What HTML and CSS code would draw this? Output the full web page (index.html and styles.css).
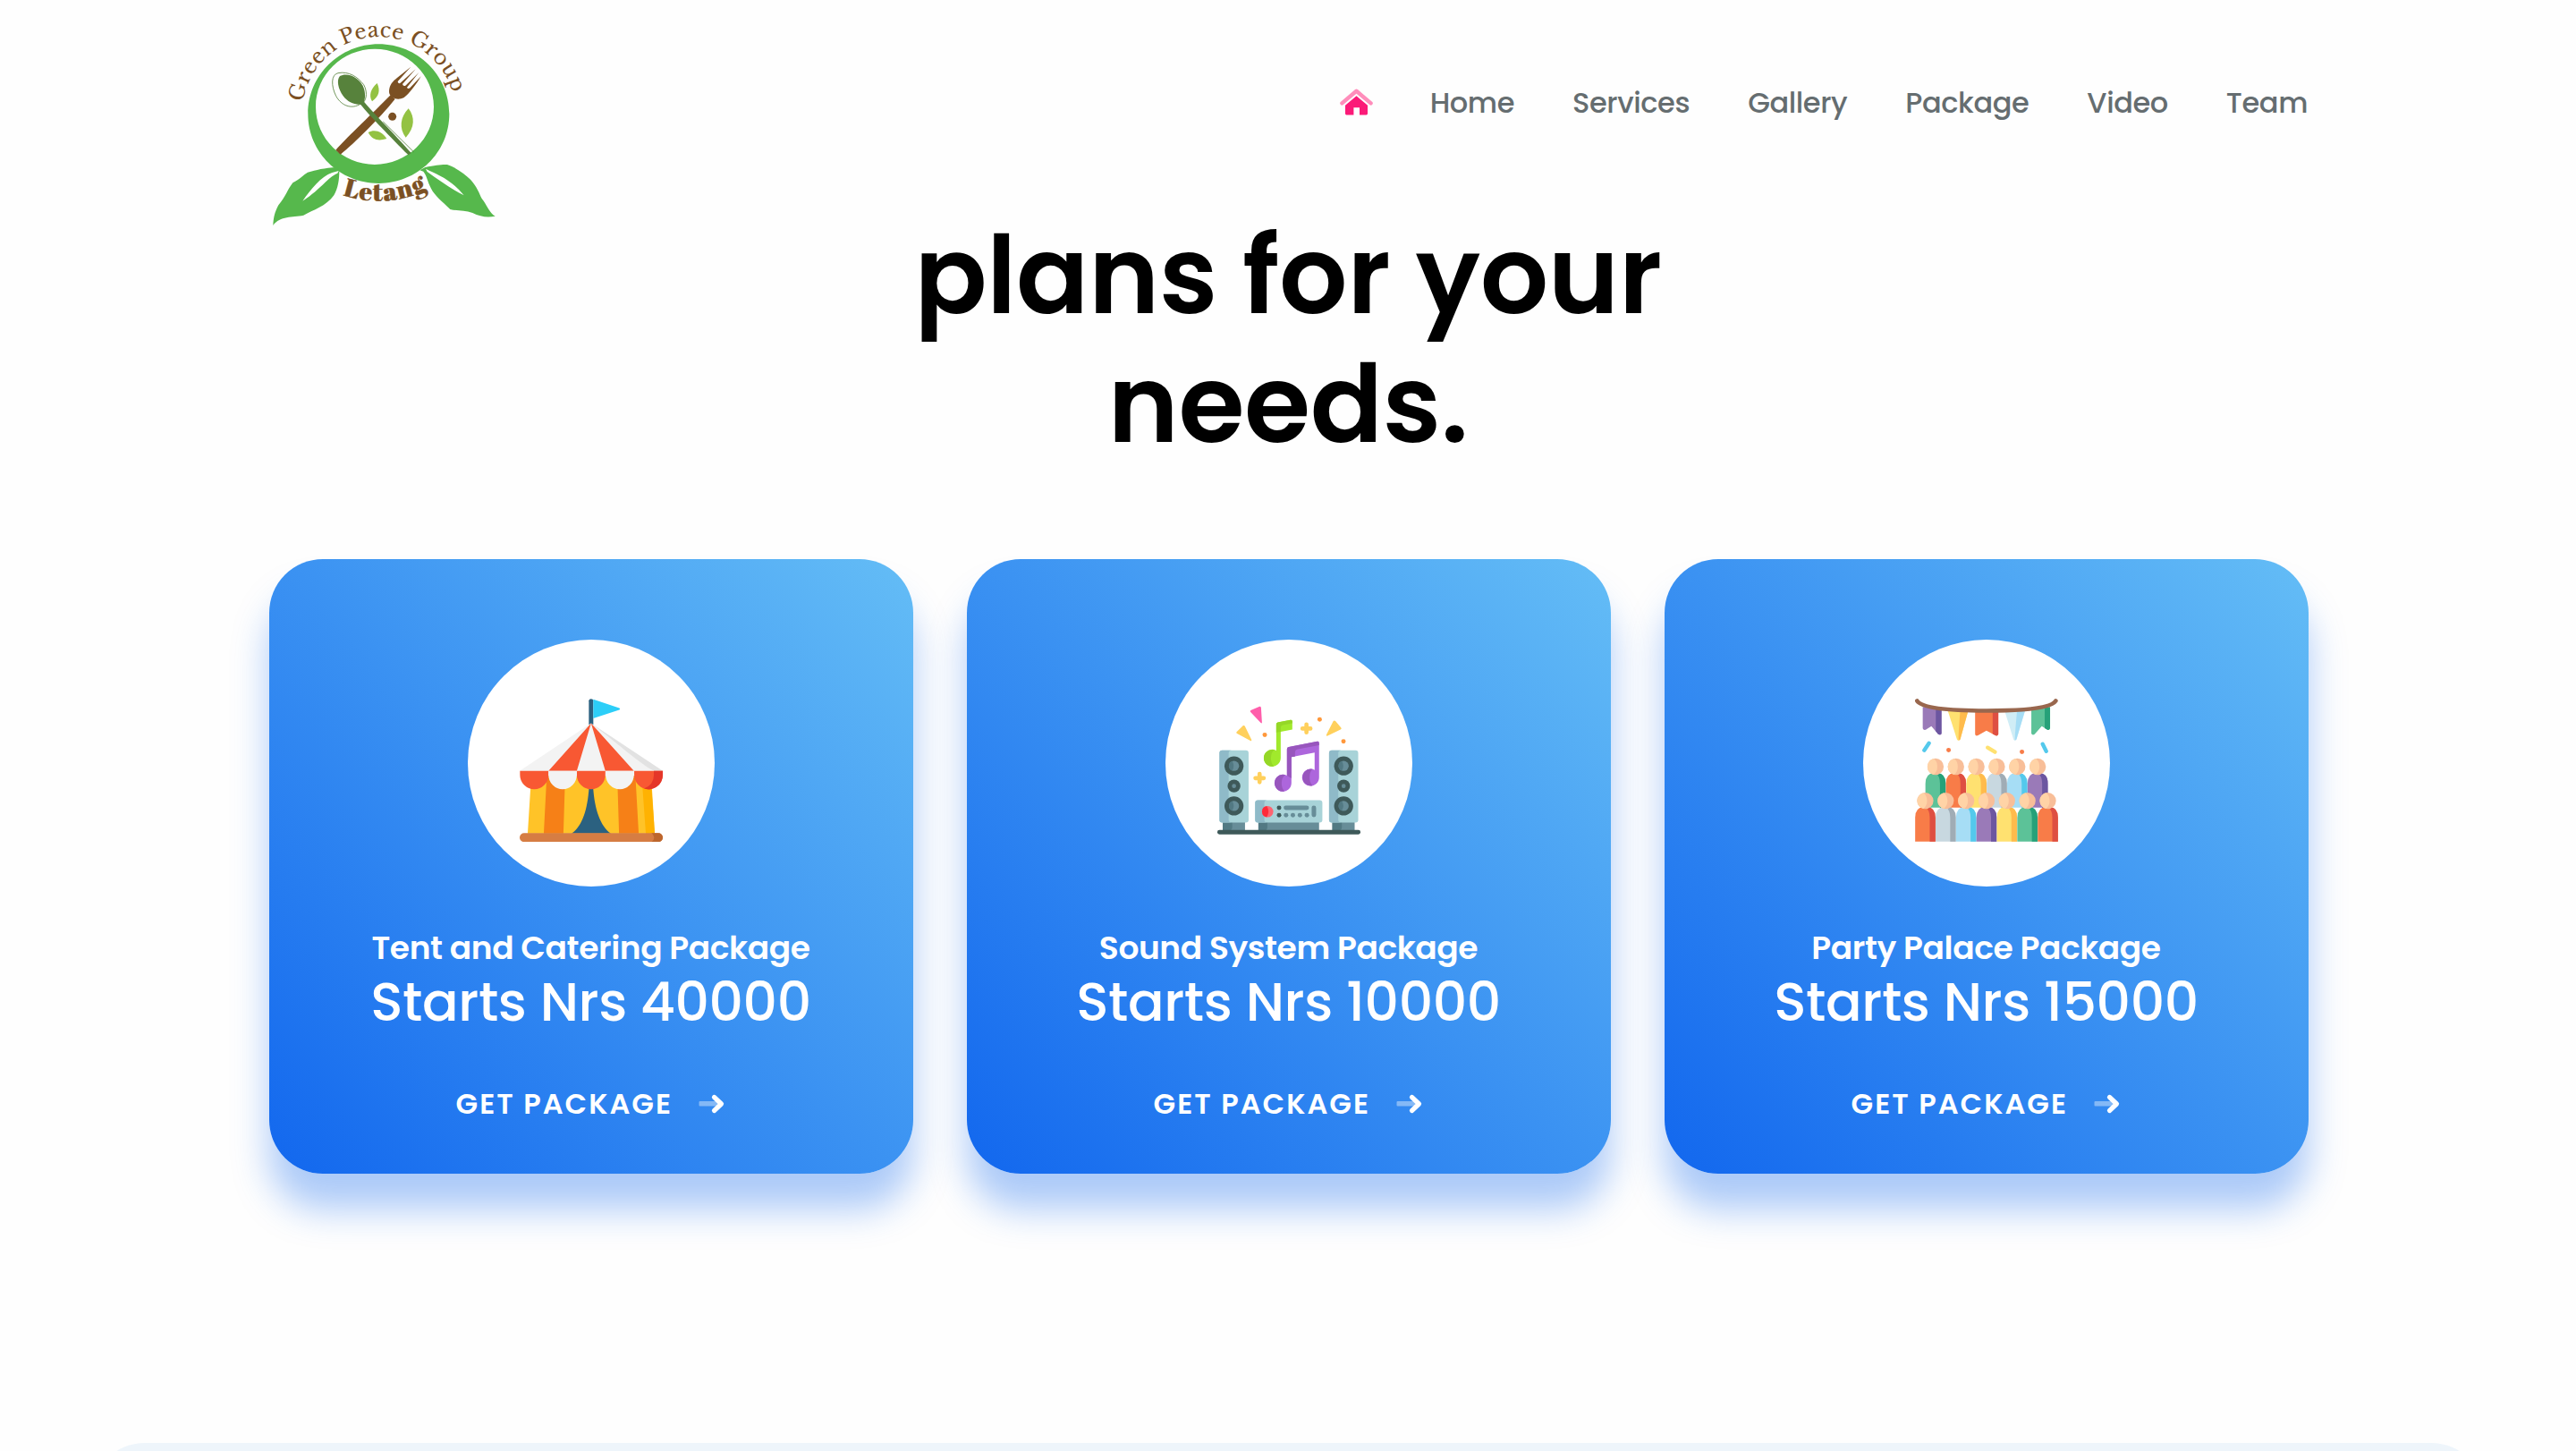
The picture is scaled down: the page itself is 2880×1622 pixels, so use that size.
FILE: index.html
```html
<!DOCTYPE html>
<html lang="en">
<head>
<meta charset="utf-8">
<title>Green Peace Group Letang</title>
<link rel="stylesheet" href="styles.css">
</head>
<body>
<header class="header">
  <a class="logo" href="#">
    <svg viewBox="0 0 840 780" width="280" height="260" role="img" aria-label="Green Peace Group Letang">
      <defs>
        <path id="arc-top" d="M146 313A257 257 0 0 1 648 282"/>
        <path id="arc-bottom" d="M280 624Q425 672 568 604"/>
      </defs>
      <path fill="#56b84c" fill-rule="evenodd" d="M400 118C530 118 637 222 637 352S530 585 400 585 163 482 163 352 270 118 400 118ZM387 134C278 134 189 221 189 328S278 522 387 522 585 435 585 328 496 134 387 134Z"/>
      <path fill="#56b84c" d="M268 544C268 572 264 602 250 625 224 662 180 674 148 692 110 700 70 692 46 726 47 700 52 680 64 658 88 630 94 606 112 583 136 570 146 558 162 548 192 540 215 533 262 531Z"/>
      <path fill="#56b84c" d="M538 541L556 531C590 524 612 521 630 522 662 532 690 556 708 572 732 600 736 616 746 636 764 658 772 686 791 695 765 700 740 697 715 684 690 675 665 678 640 672 610 642 588 626 576 602 562 575 562 560 550 545Z"/>
      <path fill="#fff" d="M145 644C172 606 206 562 244 549L266 543 262 551C226 566 212 600 145 644ZM558 536C596 556 640 568 686 625 636 600 600 572 563 546Z"/>
      <path fill="#7b5023" d="M256 473L272 488C320 448 400 370 455 302L440 289C380 350 300 425 256 473Z"/>
      <path fill="#7b5023" d="M435 276C436 254 448 242 462 231L508 194 464 243Q464 251 472 249L524 202 480 252Q482 260 490 257L535 213 495 263Q498 270 505 265L542 226C528 250 500 288 484 298 462 308 434 298 435 276Z"/>
      <path fill="#57823c" d="M270 225C292 212 330 226 346 256 356 276 356 298 351 311 378 345 450 415 509 483L500 490C440 430 372 360 339 320 318 322 296 312 281 292 264 268 258 238 270 225Z"/>
      <path fill="none" stroke="#57823c" stroke-width="2.5" d="M340 318C310 338 275 325 257 292 240 258 240 220 264 215 300 208 330 228 350 254 362 276 360 300 350 312M415 378L518 480"/>
      <path fill="#93c243" d="M395 249C406 274 402 292 378 310 366 290 374 266 395 249ZM500 334C522 362 522 398 491 431 468 402 472 362 500 334ZM365 414C388 402 412 412 427 435 400 444 378 440 365 414Z"/>
      <circle cx="446" cy="361" r="13.5" fill="#7b5023"/>
      <text class="logo-name"><textPath href="#arc-top" textLength="700">Green Peace Group</textPath></text>
      <text class="logo-place"><textPath href="#arc-bottom" textLength="290">Letang</textPath></text>
    </svg>
  </a>
  <nav class="nav">
    <a class="nav-icon" href="#" aria-label="Top">
      <svg viewBox="0 0 37 30" width="37" height="30">
        <path fill="none" stroke="#ff8dbb" stroke-width="4.4" stroke-linecap="round" stroke-linejoin="round" d="M2.4 16.4L18.5 2.8 34.6 16.4"/>
        <path fill="#fb1a78" d="M18.5 8.2L31 18.8V28Q31 29.4 29.6 29.4H22V21.2H15.4V29.4H7.4Q6 29.4 6 28V18.8Z"/>
      </svg>
    </a>
    <a href="#">Home</a>
    <a href="#">Services</a>
    <a href="#">Gallery</a>
    <a href="#">Package</a>
    <a href="#">Video</a>
    <a href="#">Team</a>
  </nav>
</header>
<main>
  <h1 class="heading">plans for your<br>needs.</h1>
  <section class="cards">
    <article class="card">
      <div class="badge">
        <svg viewBox="212 240.5 481 481" width="160" height="160">
          <path fill="#2b6180" d="M444.5 247Q445 241 452 241T459.5 247V328H444.5Z"/>
          <path fill="#2ccef8" d="M459.5 243L547 272Q552 275 547 278L459.5 307Z"/>
          <path fill="#ffc328" d="M251 500H654L666 694H239Z"/>
          <path fill="#f68017" d="M303 500H365L359 694H293ZM540 500H601L612 694H546Z"/>
          <path fill="#ffb202" d="M622 500H652L666 694H636Z"/>
          <path fill="#2b6180" d="M445 540H459C464 610 482 668 519 694H386C424 668 440 610 445 540Z"/>
          <path fill="#f3f3f3" d="M452 323L693 483H212Z"/>
          <path fill="#e2e2e2" d="M456 326L693 483H664C610 455 560 405 456 326Z"/>
          <path fill="#f85833" d="M452 323L404 483H309ZM452 323L500 483H596Z"/>
          <path fill="#f85833" d="M213 483H309V497A48 48 0 0 1 213 497ZM404 483H500V497A48 48 0 0 1 404 497ZM597 483H693V497A48 48 0 0 1 597 497Z"/>
          <path fill="#f3f3f3" d="M309 483H404V497A47.5 48 0 0 1 309 497ZM501 483H596V497A47.5 48 0 0 1 501 497Z"/>
          <path fill="#e53629" d="M663 483H693V497A48 48 0 0 1 630 543Q663 530 663 497Z"/>
          <rect x="212" y="692" width="481" height="30" rx="15" fill="#d67d43"/>
          <path fill="#bd662d" d="M655 692H678A15 15 0 0 1 678 722H655Q664 716 664 707T655 692Z"/>
        </svg>
      </div>
      <h2 class="card-title">Tent and Catering Package</h2>
      <p class="card-price">Starts Nrs 40000</p>
      <a class="card-link" href="#">GET PACKAGE
        <svg viewBox="0 0 30 24" width="30" height="24"><rect x="0.5" y="9" width="22" height="5.6" rx="1" fill="#fff" opacity=".4"/><path d="M17.5 4.5L25.5 12 17.5 19.5" class="arrow-head"/></svg>
      </a>
    </article>
    <article class="card">
      <div class="badge">
        <svg viewBox="210 240.5 481 481" width="160" height="160">
          <defs>
            <g id="speaker">
              <path fill="#678d98" d="M228 655H303V684H228Z"/><path fill="#527983" d="M228 655H260V673Q260 684 249 684H228Z"/>
              <rect x="217" y="414" width="98" height="243" rx="9" fill="#a8d3d8"/>
              <path fill="#8fbac8" d="M226 414H258Q248 414 248 424V647Q248 657 258 657H226Q217 657 217 648V423Q217 414 226 414Z"/>
              <g fill="#3e5959"><circle cx="266" cy="466.5" r="32"/><circle cx="266" cy="534" r="21.5"/><circle cx="266" cy="601" r="32"/></g>
              <g fill="#678d98"><circle cx="266" cy="466.5" r="17"/><circle cx="266" cy="534" r="7"/><circle cx="266" cy="601" r="17"/></g>
              <path fill="#527983" d="M260 450.5Q270 466.5 260 482.5A17 17 0 0 1 260 450.5ZM260 585Q270 601 260 617A17 17 0 0 1 260 585Z"/>
            </g>
          </defs>
          <use href="#speaker"/><use href="#speaker" x="368.5"/>
          <path fill="#678d98" d="M348 655H552V684H348Z"/><path fill="#527983" d="M348 655H378V673Q378 684 367 684H348Z"/>
          <rect x="337" y="582" width="226" height="75" rx="9" fill="#a8d3d8"/>
          <path fill="#8fbac8" d="M346 582H378Q368 582 368 592V647Q368 657 378 657H346Q337 657 337 648V591Q337 582 346 582Z"/>
          <circle cx="379" cy="620" r="19" fill="#fd6571"/><path fill="#fe2b3a" d="M376 601.3Q388 620 376 638.7A19 19 0 0 1 376 601.3Z"/>
          <g fill="#3e5959"><circle cx="417.5" cy="607.5" r="7.5"/><circle cx="417.5" cy="632" r="7.5"/><rect x="210" y="681.5" width="481" height="15" rx="7"/></g>
          <g fill="#678d98"><rect x="433" y="600" width="85" height="15" rx="7.5"/><rect x="527" y="600" width="15" height="39" rx="7.5"/><circle cx="441" cy="632" r="7.5"/><circle cx="464" cy="632" r="7.5"/><circle cx="487.5" cy="632" r="7.5"/><circle cx="511" cy="632" r="7.5"/></g>
          <path fill="#a1e92c" d="M408 326Q408 321 413 320L456 312Q462 311 462 317V344L423 352V440A28.5 28.5 0 1 1 408 415Z"/>
          <path fill="#95d727" d="M408 326Q408 321 413 320L456 312Q462 311 462 317V323L430 329Q423 331 423 338V352L408 354ZM395 411.5A28.5 28.5 0 1 0 400 468Q390 458 390 440T402 412Z"/>
          <path fill="#ad66dc" d="M444 410Q444 404 450 403L546 384Q552 383 552 390V505A28.5 28.5 0 1 1 537 480V422L459 437V524A28.5 28.5 0 1 1 444 499Z"/>
          <path fill="#9856bd" d="M444 410Q444 404 450 403L546 384Q552 383 552 390V397L480 410Q471 412 471 422V435L459 437V508L444 499ZM430 495.5A28.5 28.5 0 1 0 436 552Q426 542 426 524T438 497ZM524 476.5A28.5 28.5 0 1 0 530 533Q520 523 520 505T530 477Z"/>
          <path fill="#ff5eab" d="M321 285Q319 281 324 279L352 267Q356 266 357 271L360 321Q359 325 356 322Z"/>
          <path fill="#ffd05c" d="M297 331Q301 329 303 334L325 379Q325 384 321 382L275 357Q272 354 276 351ZM600 316Q603 313 607 316L626 338Q629 342 624 344L579 366Q574 366 577 361Z"/>
          <path fill="none" stroke="#ffd05c" stroke-width="14" stroke-linecap="round" d="M509.5 327V354M496 341H523M352 493V521M338 507.5H366"/>
          <g fill="#ff983b"><circle cx="369.5" cy="362.5" r="7.5"/><circle cx="554" cy="310.5" r="7.5"/><circle cx="634" cy="384" r="7.5"/></g>
        </svg>
      </div>
      <h2 class="card-title">Sound System Package</h2>
      <p class="card-price">Starts Nrs 10000</p>
      <a class="card-link" href="#">GET PACKAGE
        <svg viewBox="0 0 30 24" width="30" height="24"><rect x="0.5" y="9" width="22" height="5.6" rx="1" fill="#fff" opacity=".4"/><path d="M17.5 4.5L25.5 12 17.5 19.5" class="arrow-head"/></svg>
      </a>
    </article>
    <article class="card">
      <div class="badge">
        <svg viewBox="212 240.5 481 481" width="160" height="160">
          <defs>
            <path id="body" d="M0 165V84Q0 50 28 49H40Q68 50 68 84V165Z"/>
            <path id="side" d="M36 49H40Q68 50 68 84V165H49V84Q49 60 36 49Z"/>
            <g id="head"><circle cx="34" cy="27.5" r="27.5" fill="#f8be98"/><path fill="#ffd3a6" d="M28 0.7Q40 10 40 27.5T28 54.3A27.5 27.5 0 0 1 28 0.7Z"/></g>
          </defs>
          <path fill="#9a7ab8" d="M238 268H301V360Q297 365 290 360L267 333 248 345Q238 347 238 340Z"/><path fill="#6c56a0" d="M282 270H301V357Q298 364 290 360L282 350Z"/>
          <path fill="#ffe170" d="M322 280H391L364 377Q358 385 353 377Z"/><path fill="#ffbb4c" d="M364 280H391L364 377 359 381Q356 378 364 280Z"/>
          <path fill="#f87c48" d="M414 284H492V360Q489 367 482 364L452 348 424 364Q415 367 414 360Z"/><path fill="#de4f42" d="M473 284H492V360Q489 367 482 364L473 359Z"/>
          <path fill="#d0edf6" d="M513 280H582L553 377Q548 385 543 377Z"/><path fill="#a6ddf5" d="M555 280H582L553 377 548 381Q546 378 555 280Z"/>
          <path fill="#5cc298" d="M603 268H666V340Q665 347 657 345L638 333 614 360Q607 365 603 358Z"/><path fill="#26a179" d="M648 270H666V340Q665 347 657 345L648 340Z"/>
          <path fill="none" stroke="#99674e" stroke-width="14" stroke-linecap="round" d="M219 248C232 268 300 281 452 281S672 268 685 248"/>
          <path fill="none" stroke="#54c9ec" stroke-width="13" stroke-linecap="round" d="M259 390L243 414M641 393L653 417"/>
          <path fill="none" stroke="#ffe170" stroke-width="13" stroke-linecap="round" d="M456 405L481 420"/>
          <circle cx="325" cy="413.5" r="7.5" fill="#f87c48"/><circle cx="571.5" cy="419.5" r="7.5" fill="#f87c48"/>
          <g transform="translate(247 441.5)">
            <use href="#body" fill="#5cc298"/><use href="#side" fill="#26a179"/><use href="#head"/>
            <use href="#body" x="68.7" fill="#f87c48"/><use href="#side" x="68.7" fill="#de4f42"/><use href="#head" x="68.7"/>
            <use href="#body" x="137.4" fill="#ffe170"/><use href="#side" x="137.4" fill="#ffbb4c"/><use href="#head" x="137.4"/>
            <use href="#body" x="206" fill="#c8d8e0"/><use href="#side" x="206" fill="#a0acb5"/><use href="#head" x="206"/>
            <use href="#body" x="274.6" fill="#a6ddf5"/><use href="#side" x="274.6" fill="#54c9ec"/><use href="#head" x="274.6"/>
            <use href="#body" x="343.3" fill="#9a7ab8"/><use href="#side" x="343.3" fill="#6c56a0"/><use href="#head" x="343.3"/>
          </g>
          <g transform="translate(212.5 556)">
            <use href="#body" fill="#f87c48"/><use href="#side" fill="#de4f42"/><use href="#head"/>
            <use href="#body" x="68.7" fill="#c8d8e0"/><use href="#side" x="68.7" fill="#a0acb5"/><use href="#head" x="68.7"/>
            <use href="#body" x="137.4" fill="#a6ddf5"/><use href="#side" x="137.4" fill="#54c9ec"/><use href="#head" x="137.4"/>
            <use href="#body" x="206" fill="#9a7ab8"/><use href="#side" x="206" fill="#6c56a0"/><use href="#head" x="206"/>
            <use href="#body" x="274.6" fill="#ffe170"/><use href="#side" x="274.6" fill="#ffbb4c"/><use href="#head" x="274.6"/>
            <use href="#body" x="343.3" fill="#5cc298"/><use href="#side" x="343.3" fill="#26a179"/><use href="#head" x="343.3"/>
            <use href="#body" x="412" fill="#f87c48"/><use href="#side" x="412" fill="#de4f42"/><use href="#head" x="412"/>
          </g>
        </svg>
      </div>
      <h2 class="card-title">Party Palace Package</h2>
      <p class="card-price">Starts Nrs 15000</p>
      <a class="card-link" href="#">GET PACKAGE
        <svg viewBox="0 0 30 24" width="30" height="24"><rect x="0.5" y="9" width="22" height="5.6" rx="1" fill="#fff" opacity=".4"/><path d="M17.5 4.5L25.5 12 17.5 19.5" class="arrow-head"/></svg>
      </a>
    </article>
  </section>
  <div class="panel-wrap"><section class="panel"></section></div>
</main>
</body>
</html>
```
FILE: styles.css
```css
* { box-sizing: border-box; }

body {
  margin: 0;
  height: 1622px;
  overflow: hidden;
  background: #fefefe;
  color: #000;
  font-family: Poppins, Inter, sans-serif;
  letter-spacing: -.4px;
}

a { color: inherit; text-decoration: none; }
h1, h2, p { margin: 0; }
svg { display: block; }

.header {
  display: flex;
  align-items: flex-start;
  justify-content: space-between;
  height: 236px;
  padding: 0 300px 0 290px;
}
.logo { margin-top: 10px; letter-spacing: 0; }
.logo-name {
  font-family: "Libre Baskerville", "Liberation Serif", serif;
  font-size: 69px;
  fill: #7b5023;
}
.logo-place {
  font-family: "Abril Fatface", "DejaVu Serif", serif;
  font-size: 84px;
  fill: #7b5023;
  stroke: #7b5023;
  stroke-width: 1.5;
}

.nav {
  display: flex;
  gap: 65px;
  margin-top: 91px;
  font-size: 32px;
  font-weight: 500;
  line-height: 48px;
  color: #656d70;
}
.nav-icon {
  padding-top: 8px;
  margin-right: -1px;
}

.heading {
  font-size: 120px;
  font-weight: 600;
  line-height: 144px;
  text-align: center;
}

.cards {
  display: grid;
  grid-template-columns: 720px 720px 720px;
  column-gap: 60px;
  margin-top: 101px;
  padding-left: 300.5px;
}
.card {
  display: flex;
  flex-direction: column;
  align-items: center;
  height: 687px;
  padding-top: 90px;
  border-radius: 60px;
  background: linear-gradient(45deg, #1267ee, #64bdf6);
  box-shadow: 0 40px 40px rgba(20, 105, 238, .35);
  color: #fff;
}
.badge {
  display: flex;
  align-items: center;
  justify-content: center;
  width: 276px;
  height: 276px;
  padding-top: 15px;
  border-radius: 50%;
  background: #fff;
}
.card-title {
  margin-top: 45px;
  font-size: 36px;
  font-weight: 600;
  line-height: 48px;
}
.card-price {
  font-size: 60px;
  font-weight: 500;
  line-height: 72px;
}
.card-link {
  display: flex;
  align-items: center;
  gap: 29.5px;
  margin-top: 54px;
  font-size: 32px;
  font-weight: 600;
  line-height: 48px;
  letter-spacing: 2px;
}
.arrow-head {
  fill: none;
  stroke: #fff;
  stroke-width: 5.2;
  stroke-linecap: round;
  stroke-linejoin: round;
}

.panel-wrap {
  height: 10px;
  margin-top: 300px;
  overflow: hidden;
}
.panel {
  width: 2676px;
  height: 400px;
  margin: .5px auto 0;
  border-radius: 60px;
  background: #eef5fb;
}
```
